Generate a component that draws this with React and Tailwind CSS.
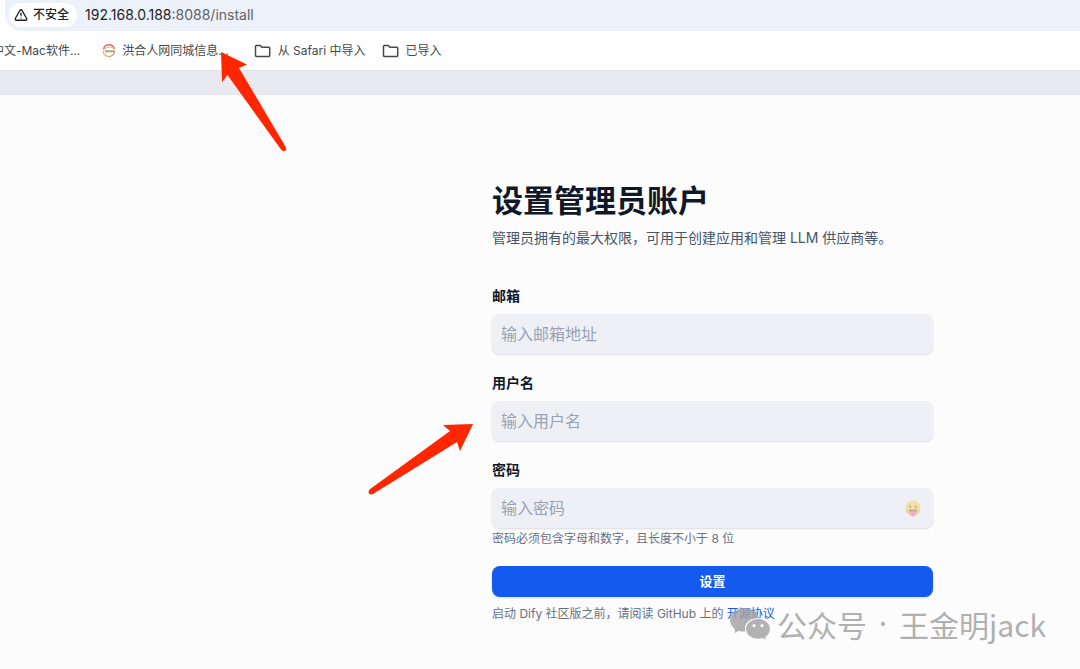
import { TriangleAlert } from 'lucide-react';

const fields = [
  { id: 'email', label: '邮箱', type: 'email', placeholder: '输入邮箱地址' },
  { id: 'name', label: '用户名', type: 'text', placeholder: '输入用户名' },
];

const inputClass =
  'block h-10 w-full rounded-lg bg-[#eff0f5] px-[9px] text-base text-gray-800 shadow-[0_1px_2px_rgba(16,24,40,0.14)] outline-none placeholder:text-[#98a2b3]';

const FolderIcon = () => (
  <svg viewBox="0 0 17 14" className="h-[14px] w-[17px]" fill="none" stroke="#45484c" strokeWidth="1.5" strokeLinejoin="round">
    <path d="M1.500 2.200c0-.5.3-.8.8-.8h4l1.700 1.900h6.900c.5 0 .8.3.8.8v7.500c0 .5-.3.8-.8.8H2.300c-.5 0-.8-.3-.8-.8z" />
  </svg>
);

const BookmarkFolder = ({ children }) => (
  <a href="#" className="flex items-center gap-[7px]">
    <FolderIcon />
    {children}
  </a>
);

const SiteIcon = () => (
  <svg viewBox="0 0 14 14" className="h-[14px] w-[14px]" fill="none">
    <path d="M1.600 5.500A5.500 5.500 0 0 1 12.400 5" stroke="#df6a58" strokeWidth="1.500" />
    <path d="M3 4.800C5 2.900 8 2.700 10.500 3.700" stroke="#eba394" />
    <path d="M3 7.300h9" stroke="#a8a878" strokeWidth="2" />
    <path d="M2.300 6.500C1.200 7 1 7.800 1.500 8.800" stroke="#df8a68" />
    <path d="M12.500 6.500a5.500 5.500 0 0 1-6 6" stroke="#e2806c" strokeWidth="1.200" />
    <path d="M1.500 8.800a5.500 5.500 0 0 0 5 3.700" stroke="#e8c56c" strokeWidth="1.500" />
  </svg>
);

const TongueFace = () => (
  <svg viewBox="0 0 16 17" className="h-[17px] w-4">
    <circle cx="8" cy="8" r="7.500" fill="#f5dd96" />
    <path d="M.6 9.500a7.500 7.500 0 0 0 14.800 0q-7 3-14.800 0z" fill="#f1c791" />
    <path d="M4.200 5.500l2 1.200-2 1.100M11.800 5.500l-2 1.200 2 1.100" fill="none" stroke="#a3966c" />
    <path d="M3.700 9.500h8.600c-.5 2.300-2 3.300-4.300 3.300s-3.800-1-4.300-3.300z" fill="#b8947a" />
    <path d="M5.500 11.300h5v2.700a2.500 2.500 0 0 1-5 0z" fill="#f09cc8" />
  </svg>
);

const WechatIcon = () => (
  <svg viewBox="0 0 42 34" className="h-[34px] w-[42px]">
    <path d="M15.500 1C7.200 1 1 6.300 1 13c0 3.700 1.900 6.800 5 9l-.3 4.300 4-2.600c1.900.6 3.800.9 5.800.9C23.800 24.600 30 19.500 30 13S23.800 1 15.500 1z" fill="#a0a0a0" />
    <path d="M29 11.500c-7 0-12.500 4.600-12.500 10.500S22 32.300 29 32.300c1.500 0 3-.2 4.500-.7l4 2-.6-3.400c3.100-2 4.600-4.900 4.600-8.200 0-5.900-5.500-10.500-12.500-10.500z" fill="#a0a0a0" stroke="#fcfcfd" strokeWidth="1.200" />
    <circle cx="25" cy="18.700" r="1.600" fill="#fcfcfd" />
    <circle cx="33" cy="18.700" r="1.600" fill="#fcfcfd" />
  </svg>
);

const App = () => {
  return (
    <div className="relative flex min-h-screen flex-col overflow-hidden bg-[#fcfcfd] font-['Inter','Noto_Sans_CJK_SC',sans-serif]">
      {/* 浏览器地址栏 */}
      <header className="bg-white">
        <div className="ml-[5px] flex h-[31px] items-center gap-2 rounded-bl-2xl bg-[#edf1fa] pb-[2px] pl-1">
          <button type="button" className="flex h-6 items-center gap-[5px] rounded-full bg-white pr-2 pl-[5px] text-xs font-medium text-[#1f1f1f]">
            <TriangleAlert className="h-[14px] w-[14px]" strokeWidth={2.2} />
            不安全
          </button>
          <span className="text-sm text-[#5f6368]">
            <span className="text-[#1f1f1f]">192.168.0.188</span>:8088/install
          </span>
        </div>

        {/* 书签栏 */}
        <nav className="flex h-10 items-center border-b border-[#e1e2e6] text-xs whitespace-nowrap text-[#45484c]">
          <a href="#" className="-ml-2">中文-Mac软件...</a>
          <a href="#" className="mr-[25px] ml-[22px] flex items-center gap-[6px]">
            <SiteIcon />
            洪合人网同城信息...
          </a>
          <div className="flex gap-4">
            <BookmarkFolder>从 Safari 中导入</BookmarkFolder>
            <BookmarkFolder>已导入</BookmarkFolder>
          </div>
        </nav>
      </header>
      <div className="h-6 bg-[#e9eaef]" />

      {/* 安装表单 */}
      <main className="flex justify-end pt-[86px] pr-[147px]">
        <div className="w-full max-w-[441px]">
          <h1 className="text-[31px] leading-10 font-bold text-[#101828]">设置管理员账户</h1>
          <p className="mt-[7px] text-sm text-[#475467]">
            管理员拥有的最大权限，可用于创建应用和管理 LLM 供应商等。
          </p>

          <form className="mt-[38px]" onSubmit={(e) => e.preventDefault()}>
            {fields.map((field) => (
              <div key={field.id} className="mb-[19px]">
                <label htmlFor={field.id} className="mb-2 block text-sm font-semibold text-[#101828]">
                  {field.label}
                </label>
                <input id={field.id} type={field.type} placeholder={field.placeholder} className={inputClass} />
              </div>
            ))}

            <label htmlFor="password" className="mb-2 block text-sm font-semibold text-[#101828]">
              密码
            </label>
            <div className="relative">
              <input id="password" type="password" placeholder="输入密码" className={inputClass} />
              <button type="button" aria-label="显示密码" className="absolute inset-y-0 right-3 flex items-center opacity-80">
                <TongueFace />
              </button>
            </div>
            <p className="mt-[3px] text-xs text-[#667085]">密码必须包含字母和数字，且长度不小于 8 位</p>

            <button type="submit" className="mt-[19px] h-[31px] w-full rounded-lg bg-[#155aef] text-[13px] font-semibold text-white shadow-sm">
              设置
            </button>
          </form>

          <p className="mt-[9px] text-xs text-[#667085]">
            启动 Dify 社区版之前，请阅读 GitHub 上的 <a href="#" className="text-[#155aef]">开源协议</a>
          </p>
        </div>
      </main>

      {/* 水印 */}
      <div className="pointer-events-none absolute right-[34px] bottom-7 flex items-center gap-[6px] text-3xl leading-8 whitespace-nowrap text-[#b0b0b0]">
        <div className="opacity-80">
          <WechatIcon />
        </div>
        <div className="flex gap-3 font-['Noto_Sans_CJK_SC',sans-serif]">
          <span>公众号</span>
          <span className="font-['Noto_Sans',sans-serif]">·</span>
          <span>王金明jack</span>
        </div>
      </div>

      {/* 标注箭头 */}
      <svg viewBox="0 0 66 100" className="pointer-events-none absolute top-[52px] left-[221px] h-[100px] w-[66px]" fill="#ff2600">
        <path d="M0 0L26 12.500L18 16L65 95.500Q66 99 62.500 99Q61 99 60 97.500L6.500 23L1 30z" />
      </svg>
      <svg viewBox="0 0 106 72" className="pointer-events-none absolute top-[424px] left-[368px] h-[72px] w-[106px]" fill="#ff2600">
        <path d="M105 0L75 1L82 7L1.500 65.500Q0 67.500 1 69.500Q3 71 5 70L89 18L92 27z" />
      </svg>
    </div>
  );
};

export default App;
